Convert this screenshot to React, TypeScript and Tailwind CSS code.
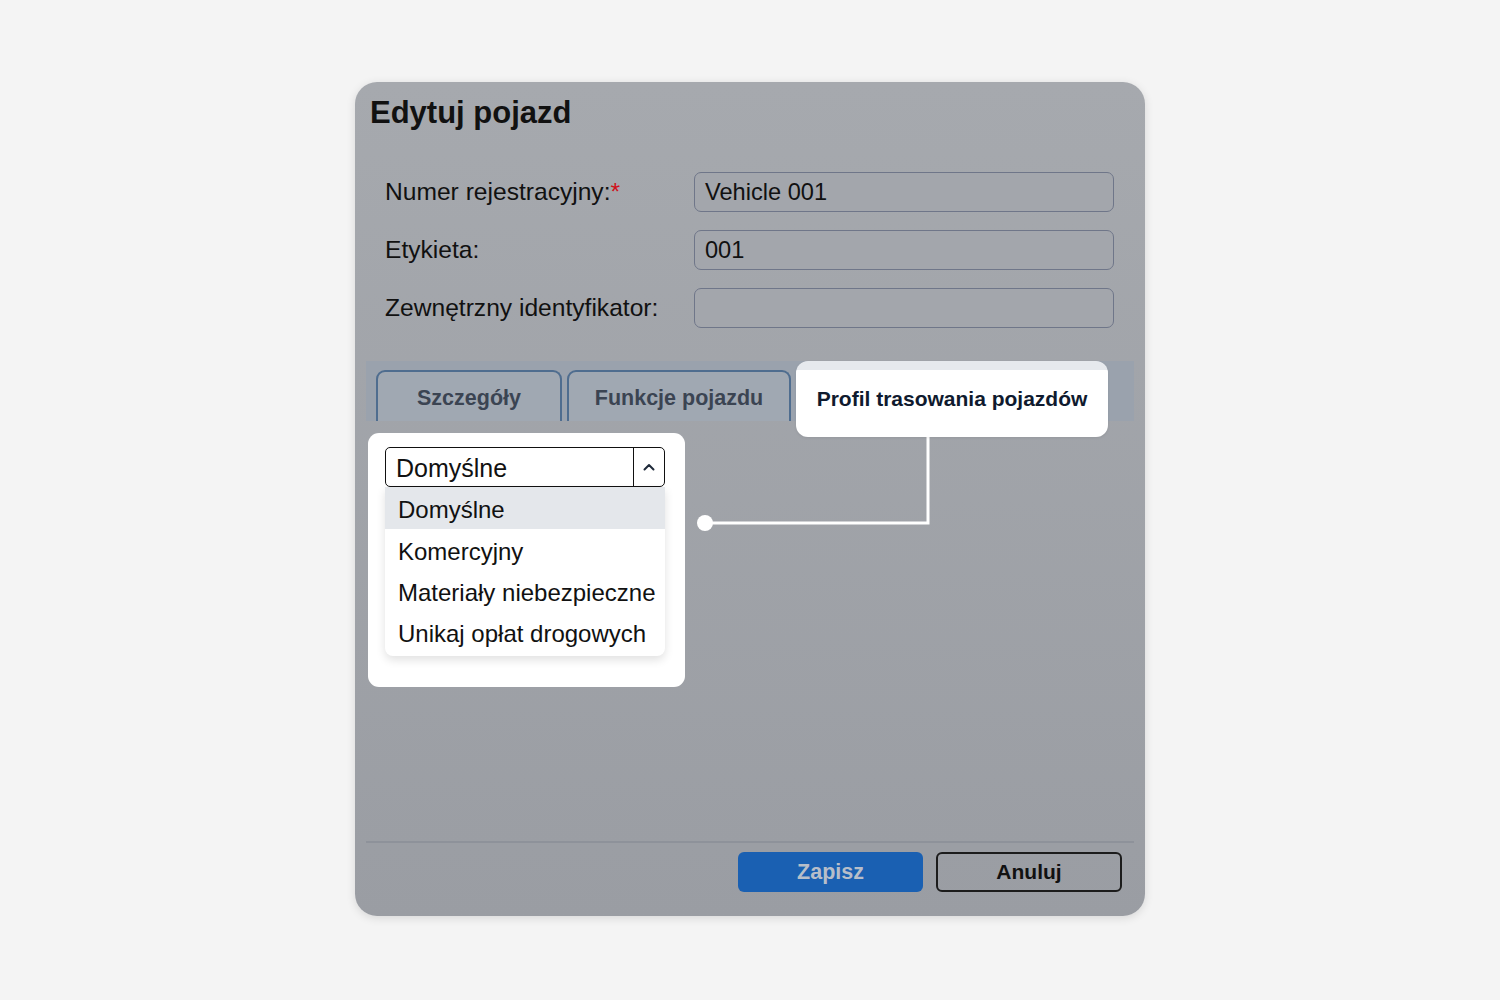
import React from "react";

const font = { fontFamily: '"Liberation Sans", Arial, Helvetica, sans-serif' };

function Row({ label, value, required }: { label: string; value: string; required?: boolean }) {
  return (
    <div className="flex items-center h-[40px]">
      <div className="w-[309px] text-[24.6px] text-[#111] leading-none">
        {label}
        {required && <span className="text-[#d0121b]">*</span>}
      </div>
      <div className="w-[420px] h-[40px] rounded-[7px] border-[1.5px] border-[#6f7689] bg-[#a3a6ac] flex items-center pl-[10px] pt-[1px] text-[23.6px] text-[#111]">
        {value}
      </div>
    </div>
  );
}

export default function App() {
  const items = ["Domyślne", "Komercyjny", "Materiały niebezpieczne", "Unikaj opłat drogowych"];
  return (
    <div className="min-h-screen w-full bg-[#f4f4f4] flex justify-center pt-[82px]" style={font}>
      <div className="relative w-[790px] h-[834px] rounded-[22px] bg-gradient-to-b from-[#a6a9ae] to-[#9a9da3] shadow-[0_2px_10px_rgba(0,0,0,0.12)] flex flex-col">
        <h1 className="pl-[15px] pt-[13px] text-[31px] leading-[36px] font-bold text-[#111]">Edytuj pojazd</h1>

        <div className="mt-[41px] pl-[30px] flex flex-col gap-[18px]">
          <Row label="Numer rejestracyjny:" value="Vehicle 001" required />
          <Row label="Etykieta:" value="001" />
          <Row label="Zewnętrzny identyfikator:" value="" />
        </div>

        <div className="mt-[33px] mx-[11px] h-[60px] bg-[#9aa2ad] flex items-start gap-[5px] pl-[10px] relative z-10">
          <div className="mt-[9px] h-[51px] w-[186px] rounded-t-[9px] border-[2px] border-b-0 border-[#4f6d8f] bg-[#a0a8b2] flex items-center justify-center pt-[4px] text-[21.5px] font-bold text-[#3b4452]">
            Szczegóły
          </div>
          <div className="mt-[9px] h-[51px] w-[224px] rounded-t-[9px] border-[2px] border-b-0 border-[#4f6d8f] bg-[#a0a8b2] flex items-center justify-center pt-[4px] text-[21.5px] font-bold text-[#3b4452]">
            Funkcje pojazdu
          </div>
          <div className="h-[76px] w-[312px] rounded-[12px] bg-[linear-gradient(#e6e9ed_0_9px,#ffffff_9px)] flex items-center justify-center text-[21px] font-bold text-[#0f1a2e] shadow-[0_1px_3px_rgba(0,0,0,0.08)]">
            Profil trasowania pojazdów
          </div>
        </div>

        <div className="flex-1 relative">
          <div className="mt-[12px] ml-[13px] w-[317px] h-[254px] rounded-[11px] bg-white pt-[14px] pl-[17px]">
            <div className="w-[280px] h-[40px] border-[1.5px] border-[#111] rounded-[5px] flex items-stretch">
              <div className="flex-1 flex items-center pl-[10px] pt-[4px] text-[25px] text-[#111]">Domyślne</div>
              <div className="w-[31px] border-l-[1.5px] border-[#111] flex items-center justify-center">
                <svg width="14" height="10" viewBox="0 0 14 10">
                  <path d="M2.5 7.5 L7 3 L11.5 7.5" fill="none" stroke="#1f2a3a" strokeWidth="2" strokeLinecap="round" strokeLinejoin="round" />
                </svg>
              </div>
            </div>
            <div className="w-[280px] rounded-b-[8px] bg-white shadow-[0_4px_10px_rgba(0,0,0,0.12)] pb-[4px]">
              {items.map((t, i) => (
                <div
                  key={t}
                  className={`flex items-center pl-[13px] pt-[4px] text-[24px] text-[#111] ${i === 0 ? "bg-[#e4e7eb] h-[42px]" : "h-[41px]"}`}
                >
                  {t}
                </div>
              ))}
            </div>
          </div>

          <svg className="absolute left-0 top-0 pointer-events-none" width="790" height="120" viewBox="0 0 790 120">
            <path d="M350 102 L573 102 L573 0" fill="none" stroke="#ffffff" strokeWidth="3" />
            <circle cx="350" cy="102" r="8" fill="#ffffff" />
          </svg>
        </div>

        <div className="mx-[11px] h-[2px] bg-[#8e929a]" />
        <div className="flex justify-end gap-[13px] pt-[9px] pb-[24px] pr-[23px]">
          <div className="w-[185px] h-[40px] rounded-[6px] bg-[#1a60b2] flex items-center justify-center text-[21.5px] font-bold text-[#b7bec9]">
            Zapisz
          </div>
          <div className="w-[186px] h-[40px] rounded-[6px] border-[2px] border-[#1c1c1c] flex items-center justify-center text-[21px] font-bold text-[#111]">
            Anuluj
          </div>
        </div>
      </div>
    </div>
  );
}
